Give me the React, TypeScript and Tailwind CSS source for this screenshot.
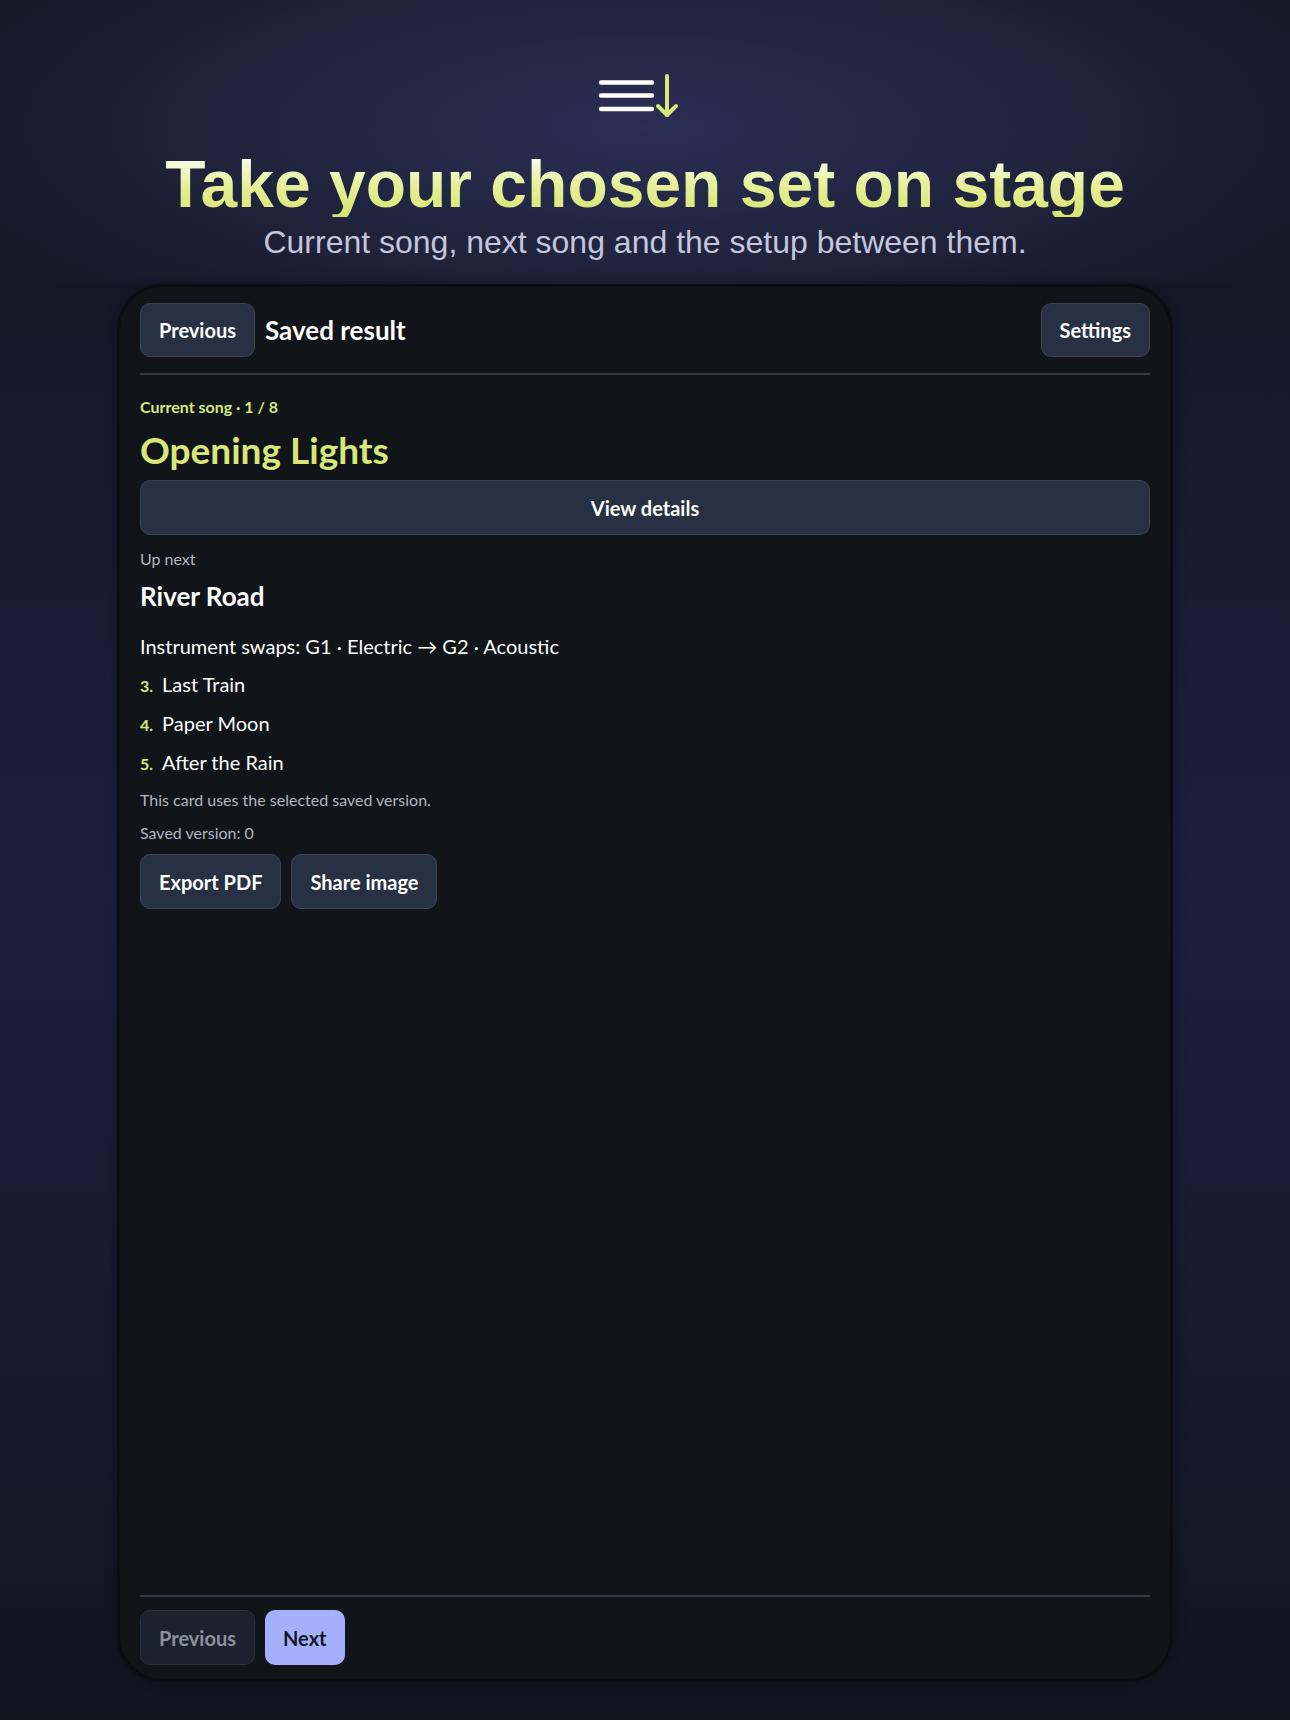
import React from 'react';

const songs = [
  { n: 3, title: 'Last Train' },
  { n: 4, title: 'Paper Moon' },
  { n: 5, title: 'After the Rain' },
];

const btn =
  'h-[54px] px-[18px] rounded-[10px] border border-[#3a4456] bg-[#273143] text-white text-[20px] font-bold';

const SetlistIcon = () => (
  <svg width="96" height="48" viewBox="0 0 96 48" fill="none">
    <g stroke="#ffffff" strokeWidth="4.5" strokeLinecap="round">
      <line x1="4" y1="10.5" x2="55" y2="10.5" />
      <line x1="4" y1="23.5" x2="55" y2="23.5" />
      <line x1="4" y1="37" x2="55" y2="37" />
    </g>
    <g stroke="#d8e77a" strokeWidth="4" strokeLinecap="round" strokeLinejoin="round">
      <line x1="70" y1="4" x2="70" y2="43" />
      <polyline points="61,34 70,43 79,34" />
    </g>
  </svg>
);

export default function App() {
  return (
    <div className="min-h-[1720px] bg-[#12151e] flex flex-col font-['Lato',sans-serif]">
      <header className="h-[284px] flex flex-col items-center pt-[72px] bg-[radial-gradient(ellipse_60%_90%_at_50%_45%,#2b2e55_0%,#1f2239_60%,#141724_100%)]">
        <SetlistIcon />
        <h1 className="mt-[31px] text-[66px] leading-none font-bold font-['Liberation_Sans',Arial,sans-serif] bg-gradient-to-b from-white via-[#e6f09a] to-[#d6e570] bg-clip-text text-transparent">
          Take your chosen set on stage
        </h1>
        <p className="mt-[6px] text-[32px] leading-[1.2] text-[#c3c6dd] font-['Liberation_Sans',Arial,sans-serif]">
          Current song, next song and the setup between them.
        </p>
      </header>

      <main className="flex-1 flex justify-center pb-[38px] bg-[linear-gradient(180deg,#141826_0%,#1c2040_42%,#12151e_100%)]">
        <div className="w-[1056px] h-[1398px] flex flex-col rounded-[46px] border-[3px] border-[#0b0d12] bg-[#111419] px-5 pt-4 pb-[14px] shadow-[0_0_12px_rgba(0,0,0,0.35)]">
          <div className="flex items-center gap-[10px]">
            <button className={btn}>Previous</button>
            <h2 className="text-[26px] font-bold text-white">Saved result</h2>
            <button className={`${btn} ml-auto`}>Settings</button>
          </div>
          <div className="mt-4 h-[2px] bg-[#343a48]" />

          <p className="mt-[22px] text-[16px] leading-5 font-bold text-[#d8e77a]">Current song · 1 / 8</p>
          <h3 className="mt-[11px] text-[37px] leading-[44px] font-bold text-[#d8e77a]">Opening Lights</h3>
          <button className={`${btn} mt-2 h-[55px] w-full`}>View details</button>

          <p className="mt-3 text-[16px] leading-6 text-[#b2b6c2]">Up next</p>
          <h4 className="mt-[9px] text-[26px] leading-8 font-bold text-white">River Road</h4>
          <p className="mt-5 text-[20px] leading-7 text-white">Instrument swaps: G1 · Electric → G2 · Acoustic</p>
          <ol className="mt-[10px] flex flex-col gap-[9px]">
            {songs.map((s) => (
              <li key={s.n} className="flex items-baseline gap-[9px] text-[20px] leading-7 text-white">
                <span className="text-[16px] font-bold text-[#d8e77a]">{s.n}.</span>
                {s.title}
              </li>
            ))}
          </ol>
          <p className="mt-[10px] text-[16px] leading-6 text-[#b2b6c2]">This card uses the selected saved version.</p>
          <p className="mt-[9px] text-[16px] leading-6 text-[#b2b6c2]">Saved version: 0</p>
          <div className="mt-[9px] flex gap-[10px]">
            <button className={`${btn} h-[55px]`}>Export PDF</button>
            <button className={`${btn} h-[55px]`}>Share image</button>
          </div>

          <div className="mt-auto h-[2px] bg-[#343a48]" />
          <div className="mt-[13px] flex gap-[10px]">
            <button className="h-[55px] px-[18px] rounded-[10px] border border-[#2a313d] bg-[#1c222d] text-[#8c919b] text-[20px] font-bold">
              Previous
            </button>
            <button className="h-[55px] px-[18px] rounded-[10px] bg-[#a5b0fd] text-[#111827] text-[20px] font-bold">
              Next
            </button>
          </div>
        </div>
      </main>
    </div>
  );
}
